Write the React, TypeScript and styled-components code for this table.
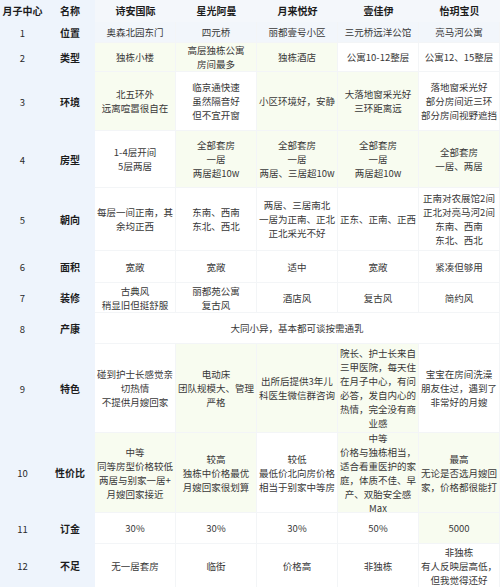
import React from "react";
import styled, { createGlobalStyle } from "styled-components";

const GlobalStyle = createGlobalStyle`
  html, body {
    margin: 0;
    padding: 0;
    background: #ffffff;
  }
  body {
    font-family: "Noto Sans CJK SC", "Noto Sans", "Liberation Sans", sans-serif;
    color: #3a3a3a;
  }
`;

const Table = styled.div`
  width: 500px;
  height: 587px;
  display: grid;
  grid-template-columns: 45px 50px 81px 81px 81px 81px 81px;
  grid-template-rows: 22px 21px 29px 59px 57px 63px 32px 30px 31px 89px 80px 31px 44px;
  overflow: hidden;
  background: #ffffff;
`;

const Cell = styled.div<{ $tint?: "green" | "blue" | "head" | "none"; $span?: number }>`
  display: flex;
  align-items: center;
  justify-content: center;
  text-align: center;
  white-space: pre-line;
  font-size: 9.5px;
  line-height: 14px;
  padding: 0 1px;
  box-sizing: border-box;
  overflow: visible;
  color: #383838;
  grid-column: ${(p) => (p.$span ? `span ${p.$span}` : "auto")};
  border-right: 1px solid #f3f5f7;
  border-bottom: 1px solid #f3f5f7;
  background: ${(p) =>
    p.$tint === "green"
      ? "#f8fcf0"
      : p.$tint === "blue"
      ? "#f2f6fb"
      : p.$tint === "head"
      ? "#f4f7fb"
      : "#ffffff"};
`;

const SideCell = styled(Cell)`
  background: #eef4fc;
  border-right: none;
  border-bottom: none;
  color: #2a2a2a;
`;

const LabelCell = styled(SideCell)`
  font-weight: 700;
  font-size: 10px;
  color: #1c1c1c;
`;

const HeadCell = styled(Cell)`
  font-weight: 700;
  font-size: 10px;
  color: #1c1c1c;
  border: none;
`;

type Tint = "green" | "none";
type Row = { no: number; name: string; cells: [string, Tint][]; merged?: string };

const G: Tint = "green";
const W: Tint = "none";

const centers = ["诗安国际", "星光阿曼", "月来悦好", "壹佳伊", "怡玥宝贝"];

const rows: Row[] = [
  {
    no: 1,
    name: "位置",
    cells: [
      ["奥森北园东门", W],
      ["四元桥", W],
      ["丽都壹号小区", W],
      ["三元桥远洋公馆", W],
      ["亮马河公寓", W],
    ],
  },
  {
    no: 2,
    name: "类型",
    cells: [
      ["独栋小楼", G],
      ["高层独栋公寓\n房间最多", G],
      ["独栋酒店", G],
      ["公寓10-12整层", W],
      ["公寓12、15整层", W],
    ],
  },
  {
    no: 3,
    name: "环境",
    cells: [
      ["北五环外\n远离喧嚣很自在", G],
      ["临京通快速\n虽然隔音好\n但不宜开窗", W],
      ["小区环境好，安静", G],
      ["大落地窗采光好\n三环距离远", G],
      ["落地窗采光好\n部分房间近三环\n部分房间视野遮挡", W],
    ],
  },
  {
    no: 4,
    name: "房型",
    cells: [
      ["1-4层开间\n5层两居", W],
      ["全部套房\n一居\n两居超10w", G],
      ["全部套房\n一居\n两居、三居超10w", G],
      ["全部套房\n一居\n两居超10w", G],
      ["全部套房\n一居、两居", G],
    ],
  },
  {
    no: 5,
    name: "朝向",
    cells: [
      ["每层一间正南，其\n余均正西", W],
      ["东南、西南\n东北、西北", W],
      ["两居、三居南北\n一居为正南、正北\n正北采光不好", W],
      ["正东、正南、正西", W],
      ["正南对农展馆2间\n正北对亮马河2间\n东南、西南\n东北、西北", W],
    ],
  },
  {
    no: 6,
    name: "面积",
    cells: [
      ["宽敞", W],
      ["宽敞", W],
      ["适中", W],
      ["宽敞", W],
      ["紧凑但够用", W],
    ],
  },
  {
    no: 7,
    name: "装修",
    cells: [
      ["古典风\n稍显旧但挺舒服", W],
      ["丽都苑公寓\n复古风", W],
      ["酒店风", W],
      ["复古风", W],
      ["简约风", W],
    ],
  },
  { no: 8, name: "产康", cells: [], merged: "大同小异，基本都可谈按需通乳" },
  {
    no: 9,
    name: "特色",
    cells: [
      ["碰到护士长感觉亲\n切热情\n不提供月嫂回家", W],
      ["电动床\n团队规模大、管理\n严格", G],
      ["出所后提供3年儿\n科医生微信群咨询", G],
      ["院长、护士长来自\n三甲医院，每天住\n在月子中心，有问\n必答，发自内心的\n热情，完全没有商\n业感", G],
      ["宝宝在房间洗澡\n朋友住过，遇到了\n非常好的月嫂", W],
    ],
  },
  {
    no: 10,
    name: "性价比",
    cells: [
      ["中等\n同等房型价格较低\n两居与别家一居+\n月嫂回家接近", G],
      ["较高\n独栋中价格最优\n月嫂回家很划算", G],
      ["较低\n最低价北向房价格\n相当于别家中等房", W],
      ["中等\n价格与独栋相当，\n适合看重医护的家\n庭，体质不佳、早\n产、双胎安全感\nMax", G],
      ["最高\n无论是否选月嫂回\n家，价格都很能打", G],
    ],
  },
  {
    no: 11,
    name: "订金",
    cells: [
      ["30%", W],
      ["30%", W],
      ["30%", W],
      ["50%", W],
      ["5000", G],
    ],
  },
  {
    no: 12,
    name: "不足",
    cells: [
      ["无一居套房", W],
      ["临街", W],
      ["价格高", W],
      ["非独栋", W],
      ["非独栋\n有人反映层高低，\n但我觉得还好", W],
    ],
  },
];

export default function App() {
  return (
    <>
      <GlobalStyle />
      <Table>
        <LabelCell>月子中心</LabelCell>
        <LabelCell>名称</LabelCell>
        {centers.map((c) => (
          <HeadCell key={c} $tint="head">
            {c}
          </HeadCell>
        ))}
        {rows.map((r) => (
          <React.Fragment key={r.no}>
            <SideCell>{r.no}</SideCell>
            <LabelCell>{r.name}</LabelCell>
            {r.merged ? (
              <Cell $span={5}>{r.merged}</Cell>
            ) : (
              r.cells.map(([text, tint], i) => (
                <Cell key={i} $tint={r.no === 1 ? "blue" : tint}>
                  {text}
                </Cell>
              ))
            )}
          </React.Fragment>
        ))}
      </Table>
    </>
  );
}
